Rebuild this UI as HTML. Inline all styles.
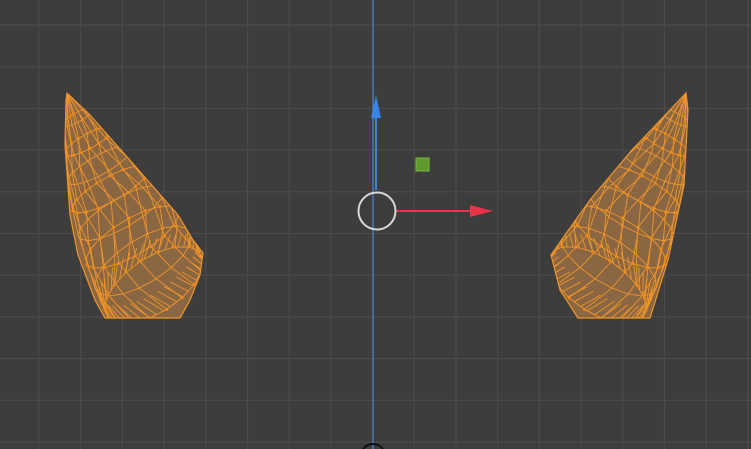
<!DOCTYPE html>
<html><head><meta charset="utf-8"><style>
html,body{margin:0;padding:0;background:#3d3d3d;overflow:hidden}
svg{display:block}
</style></head><body>
<svg id="s" width="751" height="449" viewBox="0 0 751 449" xmlns="http://www.w3.org/2000/svg">
<defs>
<clipPath id="cl"><polygon points="67,93 90,115 128,158 178,215 193,240 203,253 200,275 190,300 180,318 105,318 95,300 78,255 70,215 65,145 66,100"/></clipPath>
<clipPath id="cr"><polygon points="686,93 688,110 684,185 668,260 650,318 578,318 560,290 551,255 565,235 590,200 632,150 670,110"/></clipPath>
</defs>
<rect width="751" height="449" fill="#3d3d3d"/>
<g id="grid" stroke="#4b4b4b" stroke-width="1.2"></g>
<polygon points="67,93 90,115 128,158 178,215 193,240 203,253 200,275 190,300 180,318 105,318 95,300 78,255 70,215 65,145 66,100" fill="#8a6642" stroke="#f0962a" stroke-width="1.2"/>
<polygon points="686,93 688,110 684,185 668,260 650,318 578,318 560,290 551,255 565,235 590,200 632,150 670,110" fill="#8a6642" stroke="#f0962a" stroke-width="1.2"/>
<g id="ml" clip-path="url(#cl)" stroke="#f0962a" stroke-width="0.9" fill="none"></g>
<g id="mr" clip-path="url(#cr)" stroke="#f0962a" stroke-width="0.9" fill="none"></g>
<g id="dots" fill="#f08a1a"></g>
<line x1="373" y1="0" x2="373" y2="449" stroke="#4a78b8" stroke-width="1.5"/>
<line x1="376" y1="190" x2="376" y2="115" stroke="#3a86e8" stroke-width="2"/>
<polygon points="376,95 371,118 381,118" fill="#3a86e8"/>
<line x1="396" y1="211" x2="472" y2="211" stroke="#e8344a" stroke-width="2"/>
<polygon points="493,211 470,205 470,217" fill="#e8344a"/>
<circle cx="377" cy="211" r="18.5" fill="none" stroke="#d8d8d8" stroke-width="2"/>
<rect x="416" y="158" width="13" height="13" fill="#5f9a2e" stroke="#7ab83c" stroke-width="1"/>
<circle cx="373" cy="456" r="12" fill="none" stroke="#111" stroke-width="2"/>
</svg>
<script>
var ns="http://www.w3.org/2000/svg";
function el(p,t,a){var e=document.createElementNS(ns,t);for(var k in a)e.setAttribute(k,a[k]);p.appendChild(e);return e;}
var g=document.getElementById('grid');
for(var x=39-41.7;x<751;x+=41.7)if(Math.abs(x-373)>3)el(g,'line',{x1:x,y1:0,x2:x,y2:449});
for(var y=25;y<449;y+=41.7)el(g,'line',{x1:0,y1:y,x2:751,y2:y});
var d=document.getElementById('dots');
function cone(m,T,C,Um,Vm,Ub,Vb){
 var N=18,R=8;
 function P(t,th){
  var s=Math.pow(t,0.65),U,V;
  var w=Math.pow(t,3);
  U=[Um[0]*(1-w)+Ub[0]*w,Um[1]*(1-w)+Ub[1]*w];V=[Vm[0]*(1-w)+Vb[0]*w,Vm[1]*(1-w)+Vb[1]*w];
  if(t<1){U=[U[0]*s,U[1]*s];V=[V[0]*s,V[1]*s];}
  return [T[0]+t*(C[0]-T[0])+U[0]*Math.cos(th)+V[0]*Math.sin(th),T[1]+t*(C[1]-T[1])+U[1]*Math.cos(th)+V[1]*Math.sin(th)];}
 for(var i=0;i<N;i++){var th=i/N*2*Math.PI,pts=[];for(var j=0;j<=R;j++){var q=P(j/R,th+0.2*Math.sin(j*1.3));pts.push(q.join(','));}
  el(m,'polyline',{points:pts.join(' ')});}
 for(var j=1;j<=R;j++){var pts=[];for(var i=0;i<=N;i++){var th=i/N*2*Math.PI,q=P(j/R,th+0.2*Math.sin(j*1.3));pts.push(q.join(','));if(i<N&&j%2==0)el(d,'circle',{cx:q[0],cy:q[1],r:1.5,'clip-path':m.getAttribute('clip-path')});}
  el(m,'polyline',{points:pts.join(' ')});}
 for(var i=0;i<44;i++){var th=i/44*2*Math.PI;var a=P(1,th),b=P(0.92,th+0.2);el(m,'line',{x1:a[0],y1:a[1],x2:b[0],y2:b[1]});}
}
cone(document.getElementById('ml'),[67,93],[154,285],[58,-22],[-22,30],[49,-20],[-4,33]);
cone(document.getElementById('mr'),[686,93],[597,285],[-58,-22],[22,30],[-49,-20],[4,33]);
</script>
</body></html>
